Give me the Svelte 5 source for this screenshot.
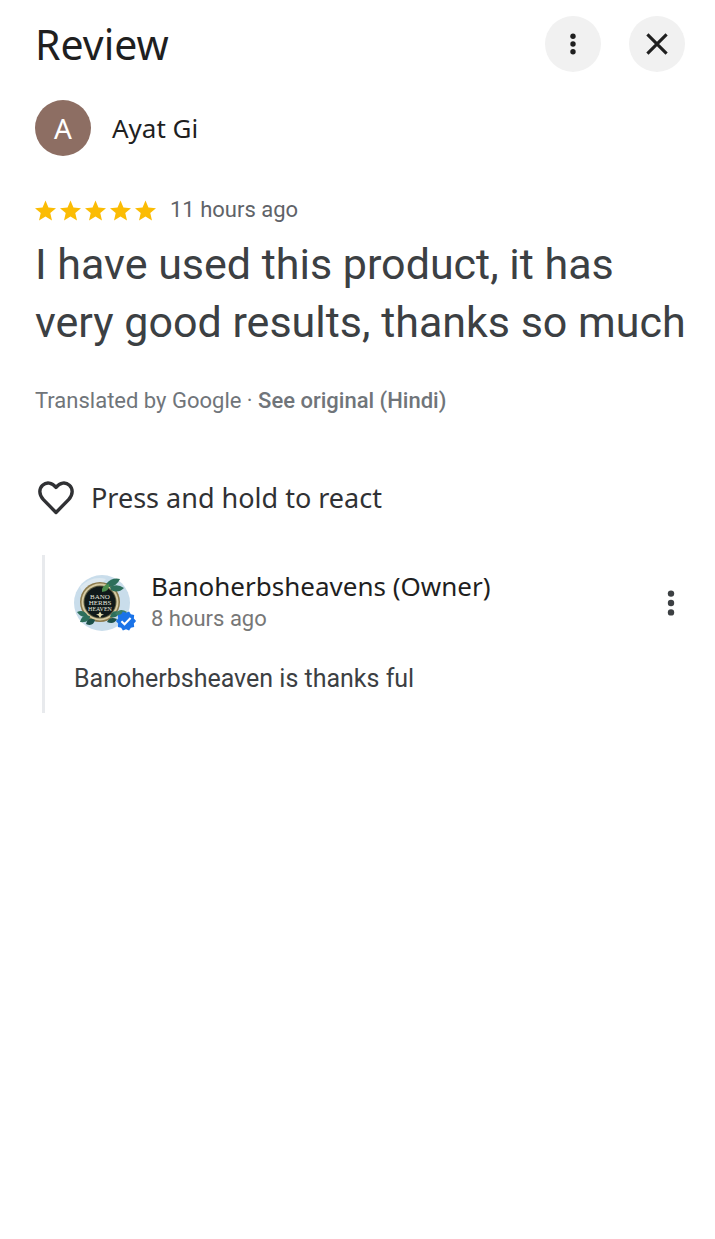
<script>
  const review = {
    author: 'Ayat Gi',
    rating: 5,
    time: '11 hours ago',
    text: 'I have used this product, it has very good results, thanks so much'
  };

  const reply = {
    author: 'Banoherbsheavens (Owner)',
    time: '8 hours ago',
    text: 'Banoherbsheaven is thanks ful'
  };
</script>

<main class="page">
  <header class="topbar">
    <h1>Review</h1>
    <div class="actions">
      <button class="round" aria-label="More options">
        <svg width="28" height="28" viewBox="0 0 28 28" fill="#1f1f1f">
          <circle cx="14" cy="6.2" r="2.7" />
          <circle cx="14" cy="14" r="2.7" />
          <circle cx="14" cy="21.8" r="2.7" />
        </svg>
      </button>
      <button class="round" aria-label="Close">
        <svg width="28" height="28" viewBox="0 0 28 28" stroke="#1f1f1f" stroke-width="3.1">
          <path d="M4.4 4.4L23.6 23.6M23.6 4.4L4.4 23.6" />
        </svg>
      </button>
    </div>
  </header>

  <section class="author">
    <span class="avatar">{review.author[0]}</span>
    <span class="name">{review.author}</span>
  </section>

  <section class="review">
    <div class="meta">
      <div class="stars" role="img" aria-label="{review.rating} stars">
        {#each Array(review.rating) as _}
          <svg width="21" height="21" viewBox="2 1.5 20 20" fill="#fbbc04">
            <path d="M12 17.27L18.18 21L16.54 13.97L22 9.24L14.81 8.63L12 2L9.19 8.63L2 9.24L7.46 13.97L5.82 21Z" />
          </svg>
        {/each}
      </div>
      <span class="time">{review.time}</span>
    </div>
    <p class="text">{review.text}</p>
    <p class="translated">Translated by Google · <a href="#original">See original (Hindi)</a></p>
  </section>

  <button class="react">
    <svg width="36" height="34" viewBox="0 0 36 34" fill="none" stroke="#303134" stroke-width="3.4" stroke-linejoin="round">
      <path d="M18 31.5L5.4 18.6C.6 13.5 1 7.5 4.6 4.2C8.4.8 14 1.3 18 6.4C22 1.3 27.6.8 31.4 4.2C35 7.5 35.4 13.5 30.6 18.6Z" />
    </svg>
    <span>Press and hold to react</span>
  </button>

  <section class="reply">
    <div class="reply-head">
      <div class="logo">
        <svg width="56" height="56" viewBox="0 0 56 56">
          <circle cx="28" cy="28" r="28" fill="#c9ddeb" />
          <path d="M6 12Q18 0 32 4L12 26Z" fill="#dce8f0" />
          <circle cx="26" cy="27" r="20" fill="#8b7a4d" />
          <circle cx="26" cy="27" r="18.5" fill="#d6cba3" />
          <circle cx="26" cy="27" r="16.5" fill="#5c5a3e" />
          <circle cx="26" cy="27" r="15.5" fill="#10191a" />
          <g fill="#2d6f5b">
            <path d="M32 9Q38 2 46 4Q43 11 35 12Z" />
            <path d="M36 12Q43 8 50 13Q44 19 37 15Z" />
            <path d="M28 17Q27 10 35 9Q36 16 28 17Z" fill="#4c8f4d" />
            <path d="M3 37Q10 34 14 41Q8 44 3 37Z" />
            <path d="M6 47Q8 39 16 41Q16 48 6 47Z" />
            <path d="M12 49Q14 41 21 45Q19 52 12 49Z" fill="#1c5149" />
            <path d="M36 42Q38 34 45 37Q44 44 36 42Z" />
            <path d="M41 39Q46 32 53 37Q48 43 41 39Z" fill="#3d8067" />
            <path d="M33 47Q36 41 43 44Q40 50 33 47Z" fill="#1c5149" />
          </g>
          <g fill="#e4e7df" font-family="Liberation Serif, serif" text-anchor="middle">
            <text x="26" y="24" font-size="7">BANO</text>
            <text x="26" y="30" font-size="7">HERBS</text>
            <text x="26" y="36" font-size="6">HEAVEN</text>
          </g>
          <path d="M26 36.5L27.5 39L30 39.5L27.5 40.5L26 43L24.5 40.5L22 39.5L24.5 39Z" fill="#e8dfb0" />
        </svg>
        <svg class="badge" width="22" height="22" viewBox="0 0 24 24">
          <path
            d="M23 12l-2.44-2.78.34-3.68-3.61-.82-1.89-3.18L12 3 8.6 1.54 6.71 4.72l-3.61.81.34 3.68L1 12l2.44 2.78-.34 3.69 3.61.82 1.89 3.18L12 21l3.4 1.46 1.89-3.18 3.61-.82-.34-3.68L23 12z"
            fill="#1a73e8"
          />
          <path d="M7 12.3L10.4 15.5L17 8.8" fill="none" stroke="#fff" stroke-width="2.3" />
        </svg>
      </div>
      <div class="owner">
        <span class="name">{reply.author}</span>
        <span class="time">{reply.time}</span>
      </div>
      <button class="menu" aria-label="Reply options">
        <svg width="28" height="28" viewBox="0 0 28 28" fill="#3c4043">
          <circle cx="14" cy="4.6" r="3.2" />
          <circle cx="14" cy="14" r="3.2" />
          <circle cx="14" cy="23.4" r="3.2" />
        </svg>
      </button>
    </div>
    <p class="reply-text">{reply.text}</p>
  </section>
</main>

<style>
  :global(body) {
    background: #fff;
  }

  .page {
    padding: 16px 22px 32px 35px;
    font-family: Roboto, 'Noto Sans', sans-serif;
    color: #1f1f1f;
  }

  h1,
  p {
    margin: 0;
    font-weight: 400;
  }

  button {
    padding: 0;
    border: 0;
    background: none;
    color: inherit;
    cursor: pointer;
  }

  svg {
    display: block;
    flex-shrink: 0;
  }

  .topbar,
  .reply-head {
    display: flex;
    align-items: center;
    justify-content: space-between;
    padding-right: 8px;
  }

  h1 {
    font-family: 'Noto Sans', sans-serif;
    font-size: 41px;
    line-height: 56px;
  }

  .actions {
    display: flex;
    gap: 28px;
  }

  .round {
    display: flex;
    align-items: center;
    justify-content: center;
    width: 56px;
    height: 56px;
    border-radius: 50%;
    background: #f1f1f1;
  }

  .author {
    display: flex;
    align-items: center;
    gap: 21px;
    margin-top: 28px;
  }

  .avatar {
    width: 56px;
    height: 56px;
    border-radius: 50%;
    background: #8d6e63;
    color: #fff;
    font-family: 'Noto Sans', sans-serif;
    font-size: 28px;
    line-height: 56px;
    text-align: center;
  }

  .name {
    font-family: 'Noto Sans', sans-serif;
    font-size: 26px;
    line-height: 32px;
  }

  .meta {
    display: flex;
    align-items: center;
    gap: 14px;
    margin-top: 38px;
  }

  .stars {
    display: flex;
    gap: 4px;
  }

  .time {
    font-size: 22px;
    line-height: 32px;
    color: #5f6368;
  }

  .text {
    margin-top: 9px;
    font-size: 43px;
    line-height: 58px;
    color: #3c4043;
  }

  .translated {
    margin-top: 34px;
    font-size: 22px;
    line-height: 32px;
    color: #70757a;
  }

  .translated a {
    color: inherit;
    font-weight: 500;
    text-decoration: none;
  }

  .react {
    display: flex;
    align-items: center;
    gap: 17px;
    margin: 63px 0 0 3px;
    font-family: 'Noto Sans', sans-serif;
    font-size: 27px;
    line-height: 36px;
    color: #303134;
  }

  .reply {
    margin: 39px 0 0 7px;
    padding: 15px 0 18px 29px;
    border-left: 3px solid #e8eaed;
  }

  .logo {
    position: relative;
    margin-right: 21px;
  }

  .badge {
    position: absolute;
    right: -7px;
    bottom: -1px;
  }

  .owner {
    display: flex;
    flex: 1;
    flex-direction: column;
    gap: 1px;
  }

  .owner .time {
    color: #777;
  }

  .menu {
    width: 28px;
  }

  .reply-text {
    margin-top: 28px;
    font-size: 25px;
    line-height: 32px;
    color: #3c4043;
  }
</style>
